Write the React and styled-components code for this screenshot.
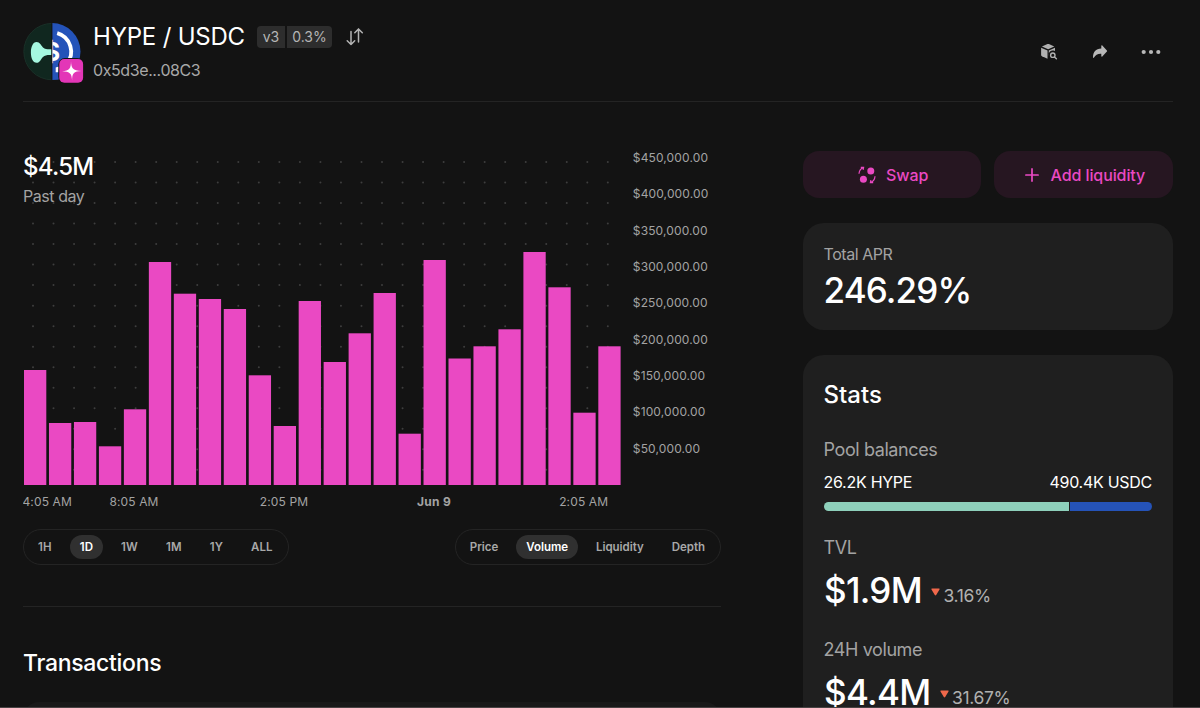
import React, { useState } from "react";
import styled, { createGlobalStyle } from "styled-components";

const pink = "#ea49c3";
const muted = "#a3a3a3";

const volumes = [
  115, 62, 63, 38.7, 75.7, 223, 191.3, 186, 176, 109.7, 59, 184, 123, 151.7,
  192, 51.3, 225, 126.5, 138.7, 155.7, 233, 197.7, 72.3, 138.7,
];

const priceTicks = [
  "$450,000.00",
  "$400,000.00",
  "$350,000.00",
  "$300,000.00",
  "$250,000.00",
  "$200,000.00",
  "$150,000.00",
  "$100,000.00",
  "$50,000.00",
];

const timeTicks = [
  { x: 24.2, label: "4:05 AM" },
  { x: 111, label: "8:05 AM" },
  { x: 261, label: "2:05 PM" },
  { x: 411, label: "Jun 9", bold: true },
  { x: 560.7, label: "2:05 AM" },
];

const BASELINE = 345;

const VolumeChart = () => (
  <ChartSvg width="698" height="374" viewBox="0 0 698 374">
    {Array.from({ length: 16 }, (_, row) =>
      Array.from({ length: 29 }, (_, col) => (
        <circle key={`${row}-${col}`} cx={10 + col * 20.53} cy={22 + row * 20.52} r="1" fill="#3e3e3e" />
      ))
    )}
    {volumes.map((value, i) => (
      <rect key={i} x={1 + i * 24.97} y={BASELINE - value} width="22.3" height={value} fill={pink} />
    ))}
    {priceTicks.map((label, i) => (
      <AxisText key={label} x="609.8" y={22 + i * 36.33}>
        {label}
      </AxisText>
    ))}
    {timeTicks.map((tick) => (
      <AxisText key={tick.label} x={tick.x} y="365.8" textAnchor="middle" $bold={tick.bold}>
        {tick.label}
      </AxisText>
    ))}
  </ChartSvg>
);

const PairLogo = () => (
  <LogoSvg width="64" height="64" viewBox="20 20 64 64">
    <clipPath id="leftHalf">
      <rect x="20" y="20" width="31.4" height="64" />
    </clipPath>
    <clipPath id="rightHalf">
      <rect x="52.4" y="20" width="32" height="64" />
    </clipPath>
    <g clipPath="url(#leftHalf)">
      <circle cx="52" cy="51.6" r="28.2" fill="#10271f" stroke="#1d352c" strokeWidth="0.8" />
      <path
        d="M36.6 42c3.4 0 4.3 3.4 6.4 5.4 2.3 2.1 5.2 2 8.6 1.9v5.7c-3.4-.2-6.3-.2-8.6 1.9-2.2 2.1-3 5.8-6.4 5.8-3.7 0-5.7-4.8-5.7-10.3S32.9 42 36.6 42z"
        fill="#a5f8e0"
      />
    </g>
    <g clipPath="url(#rightHalf)">
      <circle cx="52" cy="51.6" r="28.5" fill="#2453b9" />
      <path d="M57.2 33.2A19.2 19.2 0 0 1 66.5 64.2" fill="none" stroke="#fff" strokeWidth="3.8" />
      <path d="M57.2 72.2v-3.7l2-.6" fill="none" stroke="#fff" strokeWidth="3" />
      <text x="52" y="60.5" textAnchor="middle" fontSize="25" fontWeight="700" fill="#fff">
        $
      </text>
    </g>
    <rect x="58.3" y="58" width="25.6" height="25.6" rx="6.5" fill="#131313" />
    <rect x="59.3" y="59" width="23.8" height="23.8" rx="5" fill="#e336b7" />
    <path
      d="M71 61.3c.3 6.9 1.5 9.1 10.6 9.7-8.1.4-9.500 2.100-9.500 9.800-.4-7.500-1.900-9.200-10.100-9.600 7.600-.4 8.900-2.600 9-9.900z"
      fill="#fff"
    />
  </LogoSvg>
);

const FlipIcon = () => (
  <svg width="20" height="20" viewBox="0 0 20 20" fill="none" stroke="#b3b3b3" strokeWidth="1.5" strokeLinecap="round" strokeLinejoin="round">
    <path d="M6 4.5v13M2.2 13.7 6 17.5l3.7-3.8M13.5 15V2M9.8 5.8 13.5 2l3.8 3.8" />
  </svg>
);

const ExplorerIcon = () => (
  <svg width="18" height="18" viewBox="0 0 18 18" fill="#b0b0b0">
    <path d="M1.9 3.6 7.5 1.1c.5-.2.9-.2 1.4 0l5.4 2.5L8.2 6.3z" />
    <path d="M1.1 4.7 7.5 7.5v8.2L2 13.2c-.6-.3-.9-.7-.9-1.3z" />
    <path d="M8.8 7.5 15 4.8v3.3c-3.4-1.6-7 .8-6.2 4.900z" />
    <circle cx="12.8" cy="12.2" r="2.2" fill="none" stroke="#b0b0b0" strokeWidth="1.4" />
    <path d="m14.5 13.9 1.9 1.800" stroke="#b0b0b0" strokeWidth="1.4" strokeLinecap="round" />
  </svg>
);

const ShareIcon = () => (
  <svg width="16" height="14" viewBox="0 0 16 14" fill="#b8b8b8">
    <path d="M9.3.8c0-.6.6-.8 1-.4l4.6 5c.3.4.3.9 0 1.2l-4.6 4.8c-.4.5-1 .2-1-.4V8.7C5.8 8.5 3.5 9.7 2 12.500c-.4.600-1 .5-1-.2C1 7.200 3.700 3.800 9.300 3.500z" />
  </svg>
);

const MoreIcon = () => (
  <svg width="20" height="6" viewBox="0 0 20 6" fill="#b8b8b8">
    <circle cx="2.7" cy="3" r="2.1" />
    <circle cx="10" cy="3" r="2.1" />
    <circle cx="17.3" cy="3" r="2.1" />
  </svg>
);

const SwapIcon = () => (
  <svg width="18" height="18" viewBox="0 0 18 18" fill={pink}>
    <circle cx="12.8" cy="4.9" r="3.5" />
    <circle cx="5.4" cy="13.3" r="3.5" />
    <path
      d="M1 7.7C1.2 4.7 2.6 2.6 5.4 1.5M2.8 1.4h2.8l-.5 2.5M17 10.3c-.2 3-1.6 5.1-4.4 6.2M15.2 16.6h-2.800l.5-2.500"
      fill="none"
      stroke={pink}
      strokeWidth="1.2"
    />
  </svg>
);

const PlusIcon = () => (
  <svg width="14" height="14" viewBox="0 0 14 14" stroke={pink} strokeWidth="1.7" strokeLinecap="round">
    <path d="M7 .9v12.2M.9 7h12.2" />
  </svg>
);

const DownIcon = () => (
  <DownSvg width="9" height="8" viewBox="0 0 9 8" fill="#f0684b">
    <path d="M1.2.4h6.6c.7 0 1 .6.7 1.100L5.200 7c-.4.600-1 .6-1.400 0L.5 1.500C.2 1 .5.4 1.200.4z" />
  </DownSvg>
);

const Switcher = ({ options, value, onChange, tracking }) => (
  <Segmented>
    {options.map((option) => (
      <Segment key={option} $active={option === value} $tracking={tracking} onClick={() => onChange(option)}>
        {option}
      </Segment>
    ))}
  </Segmented>
);

const App = () => {
  const [range, setRange] = useState("1D");
  const [metric, setMetric] = useState("Volume");

  return (
    <Page>
      <GlobalStyle />
      <Header>
        <PairLogo />
        <Titles>
          <TitleRow>
            <Title>HYPE / USDC</Title>
            <Tags>
              <Tag $side="left">v3</Tag>
              <Tag $side="right">0.3%</Tag>
            </Tags>
            <FlipIcon />
          </TitleRow>
          <Address>0x5d3e...08C3</Address>
        </Titles>
        <Actions>
          <ExplorerIcon />
          <ShareIcon />
          <MoreIcon />
        </Actions>
      </Header>
      <Columns>
        <Main>
          <ChartArea>
            <VolumeChart />
            <ChartSummary>
              <ChartValue>$4.5M</ChartValue>
              <ChartPeriod>Past day</ChartPeriod>
            </ChartSummary>
          </ChartArea>
          <Controls>
            <Switcher options={["1H", "1D", "1W", "1M", "1Y", "ALL"]} value={range} onChange={setRange} tracking="0.12px" />
            <Switcher
              options={["Price", "Volume", "Liquidity", "Depth"]}
              value={metric}
              onChange={setMetric}
              tracking="-0.03px"
            />
          </Controls>
          <SectionTitle>Transactions</SectionTitle>
          <TableTop />
        </Main>
        <Side>
          <Buttons>
            <ActionButton $gap="10px" $offset="2px">
              <SwapIcon />
              Swap
            </ActionButton>
            <ActionButton $gap="12px" $offset="3px">
              <PlusIcon />
              Add liquidity
            </ActionButton>
          </Buttons>
          <AprCard>
            <AprLabel>Total APR</AprLabel>
            <AprValue>246.29%</AprValue>
          </AprCard>
          <StatsCard>
            <StatsTitle>Stats</StatsTitle>
            <StatLabel>Pool balances</StatLabel>
            <Balances>
              <span>26.2K HYPE</span>
              <span>490.4K USDC</span>
            </Balances>
            <BalanceBar>
              <BarPart $color="#8ed0bb" $grow={245.3} />
              <BarPart $color="#2553b8" $grow={82.2} />
            </BalanceBar>
            <StatLabel>TVL</StatLabel>
            <StatRow>
              <StatValue>$1.9M</StatValue>
              <DownIcon />
              <Change>3.16%</Change>
            </StatRow>
            <StatLabel>24H volume</StatLabel>
            <StatRow>
              <StatValue>$4.4M</StatValue>
              <DownIcon />
              <Change>31.67%</Change>
            </StatRow>
          </StatsCard>
        </Side>
      </Columns>
    </Page>
  );
};

const GlobalStyle = createGlobalStyle`
  * {
    box-sizing: border-box;
  }

  body {
    margin: 0;
    background: #131313;
    overflow: hidden;
  }

  svg {
    flex-shrink: 0;
  }
`;

const Page = styled.div`
  width: 1200px;
  height: 708px;
  overflow: hidden;
  background: #131313;
  border-bottom: 1px solid #484344;
  color: #fff;
  font-family: Inter, "Liberation Sans", sans-serif;
`;

const Header = styled.header`
  display: flex;
  margin: 0 27px 0 23px;
  height: 102px;
  padding-top: 20px;
  border-bottom: 1px solid #242424;
`;

const LogoSvg = styled.svg`
  margin-left: -3px;
`;

const Titles = styled.div`
  margin-left: 9px;
  padding-top: 2px;
`;

const TitleRow = styled.div`
  display: flex;
  align-items: center;
  height: 30px;
`;

const Title = styled.h1`
  margin: 0;
  padding-bottom: 1px;
  width: 164px;
  font-size: 24px;
  font-weight: 430;
  letter-spacing: -0.2px;
  white-space: nowrap;
`;

const Tags = styled.div`
  display: flex;
  gap: 2px;
  margin-right: 13px;
`;

const Tag = styled.span`
  width: ${({ $side }) => ($side === "left" ? "28px" : "45px")};
  height: 22px;
  line-height: 22px;
  text-align: center;
  border-radius: ${({ $side }) => ($side === "left" ? "4px 0 0 4px" : "0 4px 4px 0")};
  background: #2d2d2d;
  color: #b5b5b5;
  font-size: 14px;
`;

const Address = styled.div`
  margin-top: 8px;
  line-height: 21px;
  font-size: 16px;
  letter-spacing: -0.4px;
  color: #a8a8a8;
`;

const Actions = styled.div`
  display: flex;
  align-items: center;
  gap: 33.5px;
  height: 63px;
  margin-left: auto;
  padding-right: 12px;
`;

const Columns = styled.div`
  display: flex;
  justify-content: space-between;
  margin: 0 27.5px 0 23px;
`;

const Main = styled.main`
  width: 698px;
  padding-top: 38px;
`;

const ChartArea = styled.div`
  position: relative;
  height: 374px;
`;

const ChartSvg = styled.svg`
  display: block;
`;

const AxisText = styled.text`
  fill: ${muted};
  font-size: 12px;
  font-weight: ${({ $bold }) => ($bold ? 700 : 400)};
  letter-spacing: ${({ $bold }) => ($bold ? "0.3px" : "0.13px")};
`;

// sits on top of the dotted part of the chart
const ChartSummary = styled.div`
  position: absolute;
  top: 12px;
  left: 0;
`;

const ChartValue = styled.div`
  line-height: 29px;
  font-size: 24px;
  font-weight: 450;
  letter-spacing: -0.75px;
`;

const ChartPeriod = styled.div`
  margin-top: 4px;
  line-height: 22px;
  font-size: 16px;
  letter-spacing: -0.45px;
  color: ${muted};
`;

const Controls = styled.div`
  display: flex;
  justify-content: space-between;
  height: 93px;
  padding-top: 15px;
  border-bottom: 1px solid #242424;
`;

const Segmented = styled.div`
  display: flex;
  align-items: center;
  gap: 8px;
  height: 35.5px;
  padding: 0 5px 0 4px;
  border: 1px solid #242424;
  border-radius: 18px;
`;

const Segment = styled.button`
  height: 24.5px;
  padding: 0 10px;
  border: 0;
  border-radius: 13px;
  background: ${({ $active }) => ($active ? "#303030" : "transparent")};
  color: ${({ $active }) => ($active ? "#fff" : "#a8a8a8")};
  font-family: inherit;
  font-size: 11.5px;
  font-weight: 600;
  letter-spacing: ${({ $tracking }) => $tracking};
  cursor: pointer;
`;

const SectionTitle = styled.h2`
  margin: 41px 0 24px;
  line-height: 30px;
  font-size: 23px;
  font-weight: 480;
  letter-spacing: -0.3px;
`;

const TableTop = styled.div`
  height: 20px;
  border-radius: 16px 16px 0 0;
  background: #191919;
`;

const Side = styled.aside`
  width: 369.5px;
  padding-top: 49.4px;
`;

const Buttons = styled.div`
  display: flex;
  justify-content: space-between;
`;

const ActionButton = styled.button`
  display: flex;
  align-items: center;
  justify-content: center;
  gap: ${({ $gap }) => $gap};
  width: 178.3px;
  height: 47px;
  padding: 0 0 0 ${({ $offset }) => $offset};
  border: 0;
  border-radius: 16px;
  background: #261621;
  color: ${pink};
  font-family: inherit;
  font-size: 16px;
  font-weight: 500;
  letter-spacing: -0.1px;
  white-space: nowrap;
  cursor: pointer;
`;

const Card = styled.section`
  margin-top: 25px;
  padding: 0 20.5px;
  border-radius: 21px;
  background: #1f1f1f;
`;

const AprCard = styled(Card)`
  height: 107px;
  padding-top: 19.5px;
`;

const AprLabel = styled.div`
  line-height: 22px;
  font-size: 16px;
  letter-spacing: -0.45px;
  color: ${muted};
`;

const AprValue = styled.div`
  margin-top: 5px;
  line-height: 40px;
  font-size: 35px;
  font-weight: 450;
  letter-spacing: -0.85px;
`;

const StatsCard = styled(Card)`
  height: 400px;
  padding-top: 25px;
`;

const StatsTitle = styled.h2`
  margin: 0 0 28px;
  line-height: 30px;
  font-size: 24px;
  font-weight: 480;
`;

const StatLabel = styled.div`
  line-height: 24px;
  font-size: 18px;
  letter-spacing: -0.4px;
  color: ${muted};
`;

const Balances = styled.div`
  display: flex;
  justify-content: space-between;
  margin-top: 8px;
  line-height: 24px;
  font-size: 16px;
  letter-spacing: -0.27px;
`;

const BalanceBar = styled.div`
  display: flex;
  gap: 1px;
  height: 9px;
  margin: 7.5px 0 25px;
  border-radius: 5px;
  overflow: hidden;
`;

const BarPart = styled.div`
  flex: ${({ $grow }) => $grow} 1 0;
  background: ${({ $color }) => $color};
`;

const StatRow = styled.div`
  display: flex;
  align-items: center;
  height: 44px;
  margin: 8px 0 26px;
`;

const StatValue = styled.div`
  margin-left: 0.5px;
  font-size: 35px;
  font-weight: 450;
  line-height: 44px;
  letter-spacing: -0.7px;
`;

const DownSvg = styled.svg`
  margin: 5px 3px 0 9.5px;
`;

const Change = styled.span`
  padding-top: 12px;
  font-size: 17.5px;
  letter-spacing: -0.35px;
  color: #b0b0b0;
`;

export default App;
